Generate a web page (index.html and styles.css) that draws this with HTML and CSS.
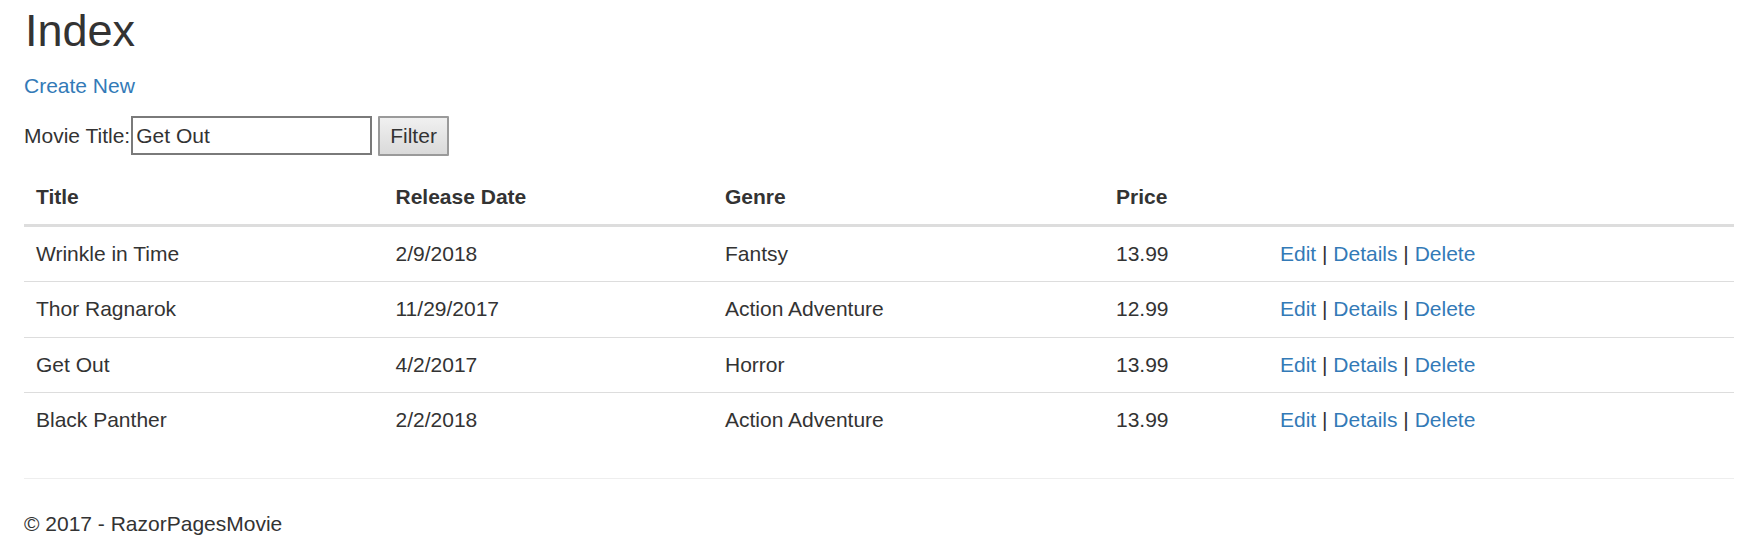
FILE: index.html
```html
<!DOCTYPE html>
<html>
<head>
<meta charset="utf-8">
<title>Index - RazorPagesMovie</title>
<link rel="stylesheet" href="styles.css">
</head>
<body>
<div class="container">
  <h2 class="page-title">Index</h2>
  <p class="create"><a href="#">Create New</a></p>
  <form class="filter-form">
    <p class="filter-line">Movie Title:<input class="title-input" type="text" value="Get Out"> <button class="filter-btn" type="button">Filter</button></p>
  </form>
  <table class="movies">
    <colgroup>
      <col class="col-title">
      <col class="col-date">
      <col class="col-genre">
      <col class="col-price">
      <col class="col-actions">
    </colgroup>
    <thead>
      <tr><th>Title</th><th>Release Date</th><th>Genre</th><th>Price</th><th></th></tr>
    </thead>
    <tbody>
      <tr><td>Wrinkle in Time</td><td>2/9/2018</td><td>Fantsy</td><td>13.99</td><td><a href="#">Edit</a> | <a href="#">Details</a> | <a href="#">Delete</a></td></tr>
      <tr><td>Thor Ragnarok</td><td>11/29/2017</td><td>Action Adventure</td><td>12.99</td><td><a href="#">Edit</a> | <a href="#">Details</a> | <a href="#">Delete</a></td></tr>
      <tr><td>Get Out</td><td>4/2/2017</td><td>Horror</td><td>13.99</td><td><a href="#">Edit</a> | <a href="#">Details</a> | <a href="#">Delete</a></td></tr>
      <tr><td>Black Panther</td><td>2/2/2018</td><td>Action Adventure</td><td>13.99</td><td><a href="#">Edit</a> | <a href="#">Details</a> | <a href="#">Delete</a></td></tr>
    </tbody>
  </table>
  <hr class="rule">
  <footer class="footer">
    <p>&copy; 2017 - RazorPagesMovie</p>
  </footer>
</div>
</body>
</html>
```

FILE: styles.css
```css
html, body {
  margin: 0;
  padding: 0;
  background: #fff;
}
body {
  font-family: "Liberation Sans", Arial, sans-serif;
  font-size: 21px;
  line-height: 30px;
  color: #333;
}
.container {
  padding: 0 28px 0 24px;
}
a {
  color: #337ab7;
  text-decoration: none;
}
.page-title {
  font-size: 45px;
  font-weight: 500;
  line-height: 1.1;
  margin: 6px 0 15px 1px;
}
.create {
  margin: 0 0 15px 0;
}
.filter-form {
  margin: 0;
}
.filter-line {
  margin: 0 0 14px 0;
  line-height: 30px;
}
.title-input {
  box-sizing: border-box;
  width: 241px;
  height: 39px;
  margin: 0 0 0 1px;
  padding: 1px 3px;
  border: 2px solid #7a7a7a;
  border-radius: 0;
  font: inherit;
  color: #333;
  background: #fff;
  vertical-align: baseline;
}
.filter-btn {
  box-sizing: border-box;
  width: 71px;
  height: 40px;
  margin: 0;
  padding: 0 6px;
  border: 2px solid #9a9a9a;
  border-radius: 1px;
  font: inherit;
  color: #333;
  background: linear-gradient(#f0f0f0, #dadada);
  vertical-align: baseline;
}
.movies {
  width: 100%;
  border-collapse: collapse;
  table-layout: fixed;
  margin: 0 0 30px 0;
}
.col-title { width: 359.5px; }
.col-date { width: 329.5px; }
.col-genre { width: 391px; }
.col-price { width: 164px; }
.movies th {
  text-align: left;
  font-weight: bold;
  padding: 12px;
  line-height: 30px;
  vertical-align: bottom;
  border-bottom: 3px solid #ddd;
}
.movies td {
  padding: 12px 12px 12.5px;
  line-height: 30px;
  vertical-align: top;
  border-top: 1px solid #ddd;
}
.movies tbody tr:first-child td {
  border-top: 0;
}
.rule {
  margin: 0 0 30px 0;
  border: 0;
  border-top: 1px solid #eee;
  height: 0;
}
.footer p {
  margin: 0 0 15px 0;
}
```
